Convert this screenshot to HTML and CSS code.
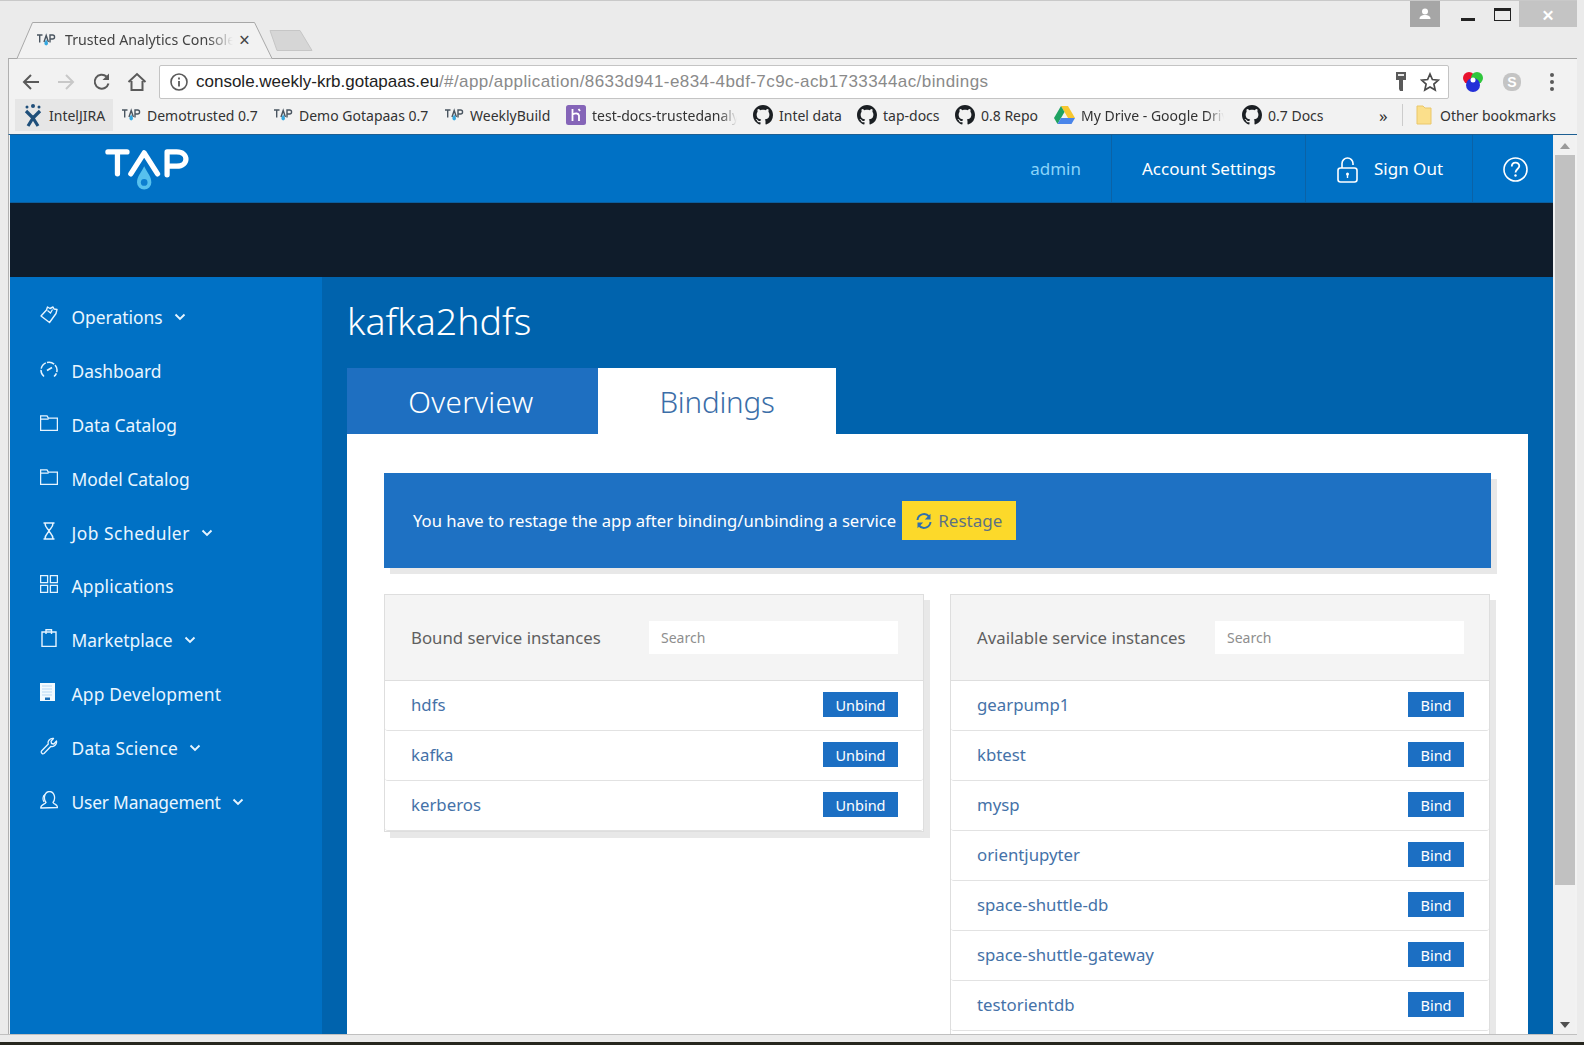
FILE: index.html
```html
<!DOCTYPE html>
<html lang="en">
<head>
<meta charset="utf-8">
<title>kafka2hdfs</title>
<link rel="stylesheet" href="styles.css">
</head>
<body>
<svg class="defs" width="0" height="0" aria-hidden="true">
  <symbol id="tapfav" viewBox="0 0 20 14">
    <path d="M1 2H6.500M3.700 2V9.500M8 9L10.200 2.500 12.400 9M14 9.500V2H16.600C19.200 2 19.200 6 16.600 6H14" fill="none" stroke="#4a5560" stroke-width="1.400"/>
    <path d="M10.200 6.500C11.200 8.300 12 9.200 12 10.600A1.800 1.800 0 018.400 10.600C8.400 9.200 9.200 8.300 10.200 6.500Z" fill="#35a8e0"/>
  </symbol>
  <symbol id="gh" viewBox="0 0 16 16">
    <path fill="#1b1f23" d="M8 0C3.58 0 0 3.58 0 8c0 3.54 2.29 6.53 5.47 7.59.4.07.55-.17.55-.38 0-.19-.01-.82-.01-1.49-2.01.37-2.53-.49-2.69-.94-.09-.23-.48-.94-.82-1.13-.28-.15-.68-.52-.01-.53.63-.01 1.08.58 1.23.82.72 1.21 1.87.87 2.33.66.07-.52.28-.87.51-1.07-1.78-.2-3.64-.89-3.64-3.95 0-.87.31-1.59.82-2.15-.08-.2-.36-1.02.08-2.12 0 0 .67-.21 2.2.82.64-.18 1.32-.27 2-.27.68 0 1.36.09 2 .27 1.53-1.04 2.2-.82 2.2-.82.44 1.1.16 1.92.08 2.12.51.56.82 1.27.82 2.15 0 3.07-1.87 3.75-3.65 3.95.29.25.54.73.54 1.48 0 1.07-.01 1.93-.01 2.2 0 .21.15.46.55.38A8.013 8.013 0 0016 8c0-4.42-3.58-8-8-8z"/>
  </symbol>
  <symbol id="chev" viewBox="0 0 12 8"><path d="M1.500 1.500L6 6l4.500-4.500" fill="none" stroke="#e6f4ff" stroke-width="1.900"/></symbol>
  <symbol id="folder" viewBox="0 0 18 16"><path d="M.6 15.400V.8h6.400l1.400 2.400h9V15.400zM.6 4.200h8" fill="none" stroke="#e6f4ff" stroke-width="1.300"/></symbol>
</svg>

<div class="window">
  <div class="titlebar">
    <div class="tabstrip">
      <div class="tab">
        <svg class="tab-shape" width="258" height="37" viewBox="0 0 258 37"><path d="M1 36.500L16.500 .5H238.500L256 36.500" fill="#f2f2f2" stroke="#a8a8a8"/></svg>
        <svg class="fav" width="20" height="14"><use href="#tapfav"/></svg>
        <span class="tab-title">Trusted Analytics Console</span>
        <span class="tab-x">×</span>
      </div>
      <svg class="newtab" width="44" height="23" viewBox="0 0 44 23"><path d="M1 1.500H31L43 21.500H8Z" fill="#d6d6d6" stroke="#c6c6c6"/></svg>
    </div>
    <div class="winctl">
      <div class="profile"><svg width="14" height="14" viewBox="0 0 14 14"><circle cx="7" cy="4.500" r="3" fill="#fff"/><path d="M1.500 12c0-3 2.500-4 5.500-4s5.500 1 5.500 4z" fill="#fff"/></svg></div>
      <div class="min"></div>
      <div class="max"></div>
      <div class="close">×</div>
    </div>
  </div>

  <div class="toolbar">
    <svg class="tb back" width="20" height="18" viewBox="0 0 20 18"><path d="M18 9H3M10 2L3 9l7 7" fill="none" stroke="#5a5a5a" stroke-width="2"/></svg>
    <svg class="tb fwd" width="20" height="18" viewBox="0 0 20 18"><path d="M2 9h15M10 2l7 7-7 7" fill="none" stroke="#c8c8c8" stroke-width="2"/></svg>
    <svg class="tb reload" width="20" height="20" viewBox="0 0 20 20"><path d="M16.500 11.500A7 7 0 1114.500 4.500" fill="none" stroke="#5a5a5a" stroke-width="2"/><path d="M17 1.500V8h-6.500z" fill="#5a5a5a"/></svg>
    <svg class="tb home" width="20" height="20" viewBox="0 0 20 20"><path d="M1.500 10L10 2l8.500 8M4.500 9v9h11V9" fill="none" stroke="#5a5a5a" stroke-width="2"/></svg>
    <div class="omnibox">
      <svg class="info" width="18" height="18" viewBox="0 0 18 18"><circle cx="9" cy="9" r="8" fill="none" stroke="#5a5a5a" stroke-width="1.600"/><path d="M9 8v5.500M9 4.500v2" stroke="#5a5a5a" stroke-width="1.800"/></svg>
      <span class="url"><span class="host">console.weekly-krb.gotapaas.eu</span>/#/app/application/8633d941-e834-4bdf-7c9c-acb1733344ac/bindings</span>
      <svg class="key" width="12" height="22" viewBox="0 0 12 22"><path d="M1 1h10v8H8v11H5l-1-2V9H1z" fill="#5a5a5a"/><rect x="3" y="3" width="6" height="2" fill="#e8e8e8"/></svg>
      <svg class="star" width="20" height="20" viewBox="0 0 20 20"><path d="M10 2l2.400 5.500 6 .6-4.500 4 1.300 5.900L10 15l-5.200 3 1.300-5.900-4.500-4 6-.6z" fill="none" stroke="#4a4a4a" stroke-width="1.700"/></svg>
    </div>
    <svg class="ext-rgb" width="22" height="24" viewBox="0 0 22 24"><circle cx="7" cy="8" r="6" fill="#e8112d"/><circle cx="15" cy="8" r="6" fill="#2fc63c"/><circle cx="11" cy="15" r="7" fill="#2430d8"/><circle cx="11" cy="10" r="2.500" fill="#fff"/></svg>
    <svg class="ext-s" width="20" height="24" viewBox="0 0 20 24"><rect x="1" y="3" width="18" height="18" rx="8" fill="#c4c4c4"/><text x="10" y="17" text-anchor="middle" class="ext-s-letter">S</text></svg>
    <svg class="dots" width="6" height="20" viewBox="0 0 6 20"><circle cx="3" cy="3" r="2" fill="#5a5a5a"/><circle cx="3" cy="10" r="2" fill="#5a5a5a"/><circle cx="3" cy="17" r="2" fill="#5a5a5a"/></svg>
  </div>

  <div class="bookmarks">
    <div class="bm bm-jira"><svg width="18" height="24" viewBox="0 0 18 24"><circle cx="9" cy="3" r="2" fill="#1f4f7a"/><circle cx="3" cy="4" r="1.500" fill="#1f4f7a"/><circle cx="15" cy="4" r="1.500" fill="#1f4f7a"/><path d="M2 8l7 7 7-7M4 23l5-8 5 8M9 15l-5-5M9 15l5-5" fill="none" stroke="#1f4f7a" stroke-width="3.200"/></svg><span>IntelJIRA</span></div>
    <div class="bm bm-a"><svg width="20" height="14"><use href="#tapfav"/></svg><span>Demotrusted 0.7</span></div>
    <div class="bm bm-b"><svg width="20" height="14"><use href="#tapfav"/></svg><span>Demo Gotapaas 0.7</span></div>
    <div class="bm bm-c"><svg width="20" height="14"><use href="#tapfav"/></svg><span>WeeklyBuild</span></div>
    <div class="bm bm-d"><svg width="20" height="20" viewBox="0 0 20 20"><rect width="20" height="20" rx="2.500" fill="#8565b8"/><path d="M6.500 4v12M6.500 9.500c3-1.500 6-1.500 6.500 1V16M12.500 4l1.500 2" fill="none" stroke="#fff" stroke-width="1.800"/></svg><span class="fade bm-fade-docs">test-docs-trustedanalytics</span></div>
    <div class="bm bm-e"><svg width="20" height="20"><use href="#gh"/></svg><span>Intel data</span></div>
    <div class="bm bm-f"><svg width="20" height="20"><use href="#gh"/></svg><span>tap-docs</span></div>
    <div class="bm bm-g"><svg width="20" height="20"><use href="#gh"/></svg><span>0.8 Repo</span></div>
    <div class="bm bm-h"><svg width="21" height="19" viewBox="0 0 21 19"><path d="M7 0h7l7 12h-7z" fill="#f7c72f"/><path d="M7 0l3.500 6L3.500 18 0 12z" fill="#1ea362"/><path d="M3.500 18l3.500-6h14l-3.500 6z" fill="#4a85ea"/></svg><span class="fade bm-fade-drive">My Drive - Google Drive</span></div>
    <div class="bm bm-i"><svg width="20" height="20"><use href="#gh"/></svg><span>0.7 Docs</span></div>
    <div class="bm-more">»</div>
    <div class="bm-sep"></div>
    <div class="bm bm-other"><svg width="16" height="20" viewBox="0 0 16 20"><path d="M1 1h6l2 2h6v16H1z" fill="#fbdf8b" stroke="#eac76a"/></svg><span>Other bookmarks</span></div>
  </div>

  <div class="viewport">
    <div class="page">
      <header class="topbar">
        <svg class="logo" width="84" height="44" viewBox="0 0 88 46">
          <path d="M2 3H22M12 3V26M26 26L40 4 54 26M64 27V3H74C87 3 87 18 74 18H64" fill="none" stroke="#fff" stroke-width="5.500" stroke-linecap="round" stroke-linejoin="round"/>
          <path d="M40 18C44 26 47.500 29 47.500 35A7.500 7.500 0 0132.500 35C32.500 29 36 26 40 18Z" fill="#57c1ee"/>
          <circle cx="40" cy="35" r="3.500" fill="#0d7fd0"/>
        </svg>
        <nav class="usernav">
          <a class="un un-admin">admin</a>
          <a class="un un-acct">Account Settings</a>
          <a class="un un-sign">
            <svg class="un-icon" width="21" height="26" viewBox="0 0 21 26"><rect x="1" y="11" width="19" height="14" rx="2.500" fill="none" stroke="#fff" stroke-width="1.600"/><path d="M5 11V6.500a5.500 5.500 0 0111 0V8" fill="none" stroke="#fff" stroke-width="1.600"/><circle cx="10.500" cy="17" r="1.500" fill="#fff"/><path d="M10.500 17v4" stroke="#fff" stroke-width="1.400"/></svg>
            <span>Sign Out</span>
          </a>
          <a class="un un-help"><svg class="un-icon" width="25" height="25" viewBox="0 0 25 25"><circle cx="12.500" cy="12.500" r="11.500" fill="none" stroke="#fff" stroke-width="1.600"/><path d="M8.800 9.500c0-5 7.500-5 7.500-.5 0 3-3.800 3-3.800 6.500" fill="none" stroke="#fff" stroke-width="1.800"/><circle cx="12.500" cy="18.500" r="1.200" fill="#fff"/></svg></a>
        </nav>
      </header>
      <div class="darkbar"></div>
      <div class="body">
        <aside class="sidebar">
          <a class="nav"><svg width="18" height="18" viewBox="0 0 18 18"><path d="M1 10l5.500-6 1-3 2.500 1.500L13 1l1 2 3 .5-1 4-6.500 9z" fill="none" stroke="#e6f4ff" stroke-width="1.400" stroke-linejoin="round"/><path d="M7.500 4.500l3 2.500 2-3.500" fill="none" stroke="#e6f4ff" stroke-width="1.200"/></svg><span>Operations</span><svg class="chev" width="12" height="8"><use href="#chev"/></svg></a>
          <a class="nav"><svg width="18" height="18" viewBox="0 0 18 18"><path d="M4 16.500A8 8 0 1114 16.500" fill="none" stroke="#e6f4ff" stroke-width="1.500" stroke-dasharray="7.500 1.300"/><path d="M7 10.500L12 7.500" stroke="#e6f4ff" stroke-width="1.700"/></svg><span>Dashboard</span></a>
          <a class="nav"><svg width="18" height="16"><use href="#folder"/></svg><span>Data Catalog</span></a>
          <a class="nav"><svg width="18" height="16"><use href="#folder"/></svg><span>Model Catalog</span></a>
          <a class="nav"><svg width="18" height="18" viewBox="0 0 18 18"><path d="M3.500 1H14.500M3.500 17H14.500M5 1c0 5 3 5.500 4 8 1-2.500 4-3 4-8M5 17c0-5 3-5.500 4-8 1 2.500 4 3 4 8" fill="none" stroke="#e6f4ff" stroke-width="1.500"/></svg><span class="wide">Job Scheduler</span><svg class="chev" width="12" height="8"><use href="#chev"/></svg></a>
          <a class="nav"><svg width="18" height="18" viewBox="0 0 18 18"><path d="M.6.600h7v7h-7zM10.400.600h7v7h-7zM.6 10.400h7v7h-7zM10.400 10.400h7v7h-7z" fill="none" stroke="#e6f4ff" stroke-width="1.300"/></svg><span class="wide-s">Applications</span></a>
          <a class="nav"><svg width="18" height="18" viewBox="0 0 18 18"><path d="M2 3h14v14.500H2zM6 5V.8h5.500V5" fill="none" stroke="#e6f4ff" stroke-width="1.400"/></svg><span>Marketplace</span><svg class="chev" width="12" height="8"><use href="#chev"/></svg></a>
          <a class="nav"><svg width="18" height="18" viewBox="0 0 18 18"><path d="M0 0h15v18H0z" fill="#f2faff"/><path d="M2.500 3h10M2.500 6h10M2.500 9h10M2.500 12h10" stroke="#7fb7e6" stroke-width="1" stroke-dasharray="1 1"/><rect x="5" y="14.500" width="5" height="2.500" fill="#1a6fb8"/></svg><span class="wide-s">App Development</span></a>
          <a class="nav"><svg width="18" height="18" viewBox="0 0 18 18"><path d="M1.500 14l6.800-7c-1-3 1.700-6 5.200-5.500l-2.500 2.700.5 2.300 2.300.5L16.500 4c.6 3.500-2.500 6.300-5.500 5.300l-7 7.200c-1.500 1-3.500-1-2.500-2.500z" fill="none" stroke="#e6f4ff" stroke-width="1.300" stroke-linejoin="round"/></svg><span class="wide-s">Data Science</span><svg class="chev" width="12" height="8"><use href="#chev"/></svg></a>
          <a class="nav"><svg width="18" height="18" viewBox="0 0 18 18"><path d="M.7 17c0-4 4.300-3.500 5.300-5.500-3-4-1.500-11 3.500-11s6.500 7 3.500 11c1 2 4.500 1.500 4.500 5z" fill="none" stroke="#e6f4ff" stroke-width="1.300" stroke-linejoin="round"/><path d="M5 3.500C2.500 5 2.500 9 4 11" fill="none" stroke="#e6f4ff" stroke-width="1.200"/></svg><span class="narrow">User Management</span><svg class="chev" width="12" height="8"><use href="#chev"/></svg></a>
        </aside>
        <main class="main">
          <h1 class="title">kafka2hdfs</h1>
          <div class="tabs">
            <a class="ptab ptab-over">Overview</a>
            <a class="ptab ptab-on">Bindings</a>
          </div>
          <section class="panel">
            <div class="banner">
              <span>You have to restage the app after binding/unbinding a service</span>
              <button class="restage"><svg width="16" height="16" viewBox="0 0 16 16"><path d="M1.500 7A6.500 6.500 0 0113 3.500M14.500 9A6.500 6.500 0 013 12.500" fill="none" stroke="#2f6fae" stroke-width="2"/><path d="M14.500 .8V6.500H8.800zM1.500 15.200V9.500H7.200z" fill="#2f6fae"/></svg>Restage</button>
            </div>
            <div class="cols">
              <div class="card">
                <div class="card-head"><span class="card-title">Bound service instances</span><div class="search">Search</div></div>
                <div class="row"><a>hdfs</a><button class="act act-un">Unbind</button></div>
                <div class="row"><a>kafka</a><button class="act act-un">Unbind</button></div>
                <div class="row"><a>kerberos</a><button class="act act-un">Unbind</button></div>
              </div>
              <div class="card card-long">
                <div class="card-head"><span class="card-title">Available service instances</span><div class="search">Search</div></div>
                <div class="row"><a>gearpump1</a><button class="act">Bind</button></div>
                <div class="row"><a>kbtest</a><button class="act">Bind</button></div>
                <div class="row"><a>mysp</a><button class="act">Bind</button></div>
                <div class="row"><a>orientjupyter</a><button class="act">Bind</button></div>
                <div class="row"><a>space-shuttle-db</a><button class="act">Bind</button></div>
                <div class="row"><a>space-shuttle-gateway</a><button class="act">Bind</button></div>
                <div class="row"><a>testorientdb</a><button class="act">Bind</button></div>
              </div>
            </div>
          </section>
        </main>
      </div>
    </div>
    <div class="scrollbar">
      <svg class="sb-up" width="10" height="6" viewBox="0 0 10 6"><path d="M5 0l5 6H0z" fill="#9a9a9a"/></svg>
      <div class="sb-thumb"></div>
      <div class="sb-rest"></div>
      <svg class="sb-down" width="10" height="6" viewBox="0 0 10 6"><path d="M0 0h10L5 6z" fill="#505050"/></svg>
    </div>
  </div>
  <div class="statusedge"></div>
</div>
<div class="desktop"></div>
</body>
</html>
```
FILE: styles.css
```css
* { box-sizing: border-box; }
html, body { margin: 0; padding: 0; height: 1045px; overflow: hidden; background: #ebebeb; }
body { font-family: "Noto Sans", "Open Sans", sans-serif; display: flex; flex-direction: column; }
.defs { position: absolute; }
a { color: inherit; text-decoration: none; }
button { font-family: inherit; border: 0; cursor: pointer; }

.window { flex: none; height: 1042px; width: 1577px; display: flex; flex-direction: column; background: #ebebeb; border-top: 1px solid #c9c9c9; }
.desktop { flex: 1; background: #26261e; }

/* title bar */
.titlebar { height: 57px; flex: none; display: flex; justify-content: space-between; }
.tabstrip { display: flex; align-items: flex-end; padding-left: 16px; }
.tab { position: relative; width: 258px; height: 37px; display: flex; align-items: center; padding: 0 0 2px 20px; margin-bottom: -1px; font-size: 14.200px; color: #444; }
.tab-shape { position: absolute; left: 0; top: 0; }
.fav { position: relative; flex: none; }
.tab-title { position: relative; margin-left: 9px; width: 168px; white-space: nowrap; overflow: hidden; -webkit-mask-image: linear-gradient(90deg, #000 85%, transparent); mask-image: linear-gradient(90deg, #000 85%, transparent); }
.tab-x { position: relative; margin-left: 6px; font-size: 19px; color: #444; }
.newtab { margin: 0 0 6px -5px; }
.winctl { display: flex; align-items: flex-start; }
.profile { width: 30px; height: 26px; background: #a6a6a6; display: flex; align-items: center; justify-content: center; }
.min { width: 14px; height: 3px; background: #222; margin: 17px 0 0 21px; }
.max { width: 17px; height: 13px; border: 1.500px solid #222; border-top-width: 3px; margin: 7px 0 0 19px; }
.close { width: 58px; height: 26px; background: #c4c4c4; color: #fff; font-size: 22px; line-height: 26px; text-align: center; margin-left: 8px; font-weight: 600; }

/* toolbar */
.toolbar { flex: none; height: 42px; margin-left: 8px; background: #f2f2f2; border-top: 1px solid #a8a8a8; display: flex; align-items: center; border-left: 1px solid #b0b0b0; padding: 4px 0 0 12px; }
.tb { flex: none; }
.fwd { margin-left: 15px; }
.reload { margin-left: 16px; }
.home { margin-left: 15px; }
.omnibox { flex: none; width: 1290px; height: 34px; margin-left: 12px; background: #fff; border: 1px solid #c4c4c4; border-radius: 2px; display: flex; align-items: center; padding-left: 10px; }
.info { flex: none; }
.url { margin-left: 8px; font-family: "Liberation Sans", sans-serif; font-size: 17px; color: #8a8a8a; white-space: nowrap; letter-spacing: .42px; }
.host { color: #222; letter-spacing: 0; }
.key { margin-left: auto; }
.star { margin: 0 8px 0 13px; }
.ext-rgb { margin-left: 13px; flex: none; }
.ext-s { margin-left: 18px; flex: none; }
.dots { margin-left: 27px; flex: none; }
.ext-s-letter { font-size: 14px; font-weight: 700; fill: #fff; font-family: "Liberation Sans", sans-serif; }

/* bookmarks */
.bookmarks { flex: none; height: 35px; margin-left: 8px; background: #f2f2f2; display: flex; align-items: center; font-size: 14px; color: #333; border-left: 1px solid #b0b0b0; padding: 0 0 5px 6px; white-space: nowrap; }
.bm { flex: none; display: flex; align-items: center; gap: 6px; height: 100%; }
.bm svg { flex: none; }
.bm-jira { width: 98px; background: #e6e6e6; padding-left: 9px; gap: 7px; height: 32px; }
.bm-a { margin-left: 8px; width: 152px; }
.bm-b { width: 171px; }
.bm-c { width: 122px; }
.bm-d { width: 187px; }
.bm-e { width: 104px; }
.bm-f { width: 98px; }
.bm-g { width: 99px; }
.bm-h { width: 188px; }
.bm-i { width: 137px; }
.fade { overflow: hidden; -webkit-mask-image: linear-gradient(90deg, #000 88%, transparent); mask-image: linear-gradient(90deg, #000 88%, transparent); }
.bm-fade-docs { width: 145px; }
.bm-fade-drive { width: 143px; }
.bm-more { flex: none; width: 21px; font-size: 17px; }
.bm-sep { flex: none; width: 1px; height: 22px; background: #ccc; margin-left: 2px; }
.bm-other { margin-left: 13px; gap: 8px; }

/* page */
.viewport { flex: none; height: 900px; margin-left: 8px; padding-left: 2px; display: flex; background: #f2f2f2; border-left: 1px solid #b0b0b0; overflow: hidden; border-top: 1px solid #1d5f93; margin-top: -1px; }
.page { flex: none; width: 1543px; display: flex; flex-direction: column; height: 100%; margin-left: -1px; }
.topbar { flex: none; height: 68px; background: #0071c5; display: flex; justify-content: space-between; align-items: flex-start; border-bottom: 1px solid #0b5e9e; }
.logo { margin: 14px 0 0 96px; flex: none; overflow: visible; }
.usernav { display: flex; height: 100%; }
.un { display: flex; align-items: center; color: #fff; font-size: 17px; border-left: 1px solid #0b62a6; height: 100%; }
.un-icon { margin-top: 2px; }
.un-admin { border-left: 0; color: #8ad4fa; padding-right: 30px; }
.un-acct { width: 194px; padding-left: 30px; }
.un-sign { width: 167px; padding-left: 31px; gap: 16px; }
.un-help { width: 81px; padding-left: 30px; }
.darkbar { flex: none; height: 74px; background: #0f1c2b; }
.body { flex: 1; min-height: 0; display: flex; }
.sidebar { flex: none; width: 312px; background: #0071c5; padding: 13px 0 0 30px; }
.nav { height: 53.900px; display: flex; align-items: center; font-size: 17.400px; color: #eaf6ff; }
.nav > svg:first-child { flex: none; width: 18px; margin-right: 13.500px; margin-top: -4px; }
.wide { letter-spacing: .5px; }
.wide-s { letter-spacing: .2px; }
.narrow { letter-spacing: -.2px; }
.chev { margin-left: 11px; }
.main { flex: 1; min-width: 0; background: #0063ad; padding: 0 25px 0 25px; display: flex; flex-direction: column; overflow: hidden; }
.title { margin: 21px 0 0; height: 70px; font-size: 37.500px; line-height: 46px; font-weight: 300; color: #fff; flex: none; }
.tabs { flex: none; display: flex; height: 66px; }
.ptab { display: flex; align-items: center; justify-content: center; font-size: 29.500px; font-weight: 300; color: #fff; background: #1e6fc1; width: 251px; }
.ptab-over { letter-spacing: .35px; padding-right: 3px; }
.ptab-on { background: #fff; color: #3b6ea8; width: 238px; letter-spacing: -.2px; }
.panel { flex: 1; background: #fff; padding: 39px 37px 0 37px; }
.banner { height: 95px; background: #1e71c3; box-shadow: 6px 6px 0 #e8e8e8; color: #fff; display: flex; align-items: center; padding-left: 29px; gap: 6px; font-size: 16.650px; }
.restage { height: 39px; width: 114px; background: #fcd92a; color: #5c7183; font-size: 17px; display: flex; align-items: center; justify-content: center; gap: 6px; padding: 0; }
.cols { display: grid; grid-template-columns: 540px 540px; column-gap: 26px; align-items: start; margin-top: 26px; }
.card { border: 1px solid #dedede; box-shadow: 6px 6px 0 #e8e8e8; background: #fff; }
.card-long { padding-bottom: 30px; }
.card-head { height: 86px; background: #f4f4f4; border-bottom: 1px solid #dedede; display: flex; align-items: center; padding: 0 25px 0 26px; font-size: 16.800px; color: #5f5f5f; }
.search { margin-left: auto; width: 249px; height: 33px; background: #fff; color: #8e8e8e; font-size: 14px; line-height: 33px; padding-left: 12px; }
.row { height: 50px; border-bottom: 1px solid #e2e2e2; border-radius: 3px; display: flex; align-items: center; justify-content: space-between; padding: 0 25px 2px 26px; font-size: 16.800px; color: #4572a8; }
.act { width: 56px; height: 25px; background: #1c6fc3; color: #fff; font-size: 14.500px; padding: 0; }
.act-un { width: 75px; }

/* scrollbar */
.scrollbar { flex: none; width: 22px; padding-left: 2px; background: #f1f1f1; display: flex; flex-direction: column; align-items: center; }
.sb-up { margin: 8px 0 6px; flex: none; }
.sb-thumb { flex: none; width: 100%; height: 730px; background: #c1c1c1; }
.sb-rest { flex: 1; }
.sb-down { margin: 0 0 6px; flex: none; }
.statusedge { flex: 1; background: #ebebeb; border-top: 1px solid #c0c0c0; }
```
